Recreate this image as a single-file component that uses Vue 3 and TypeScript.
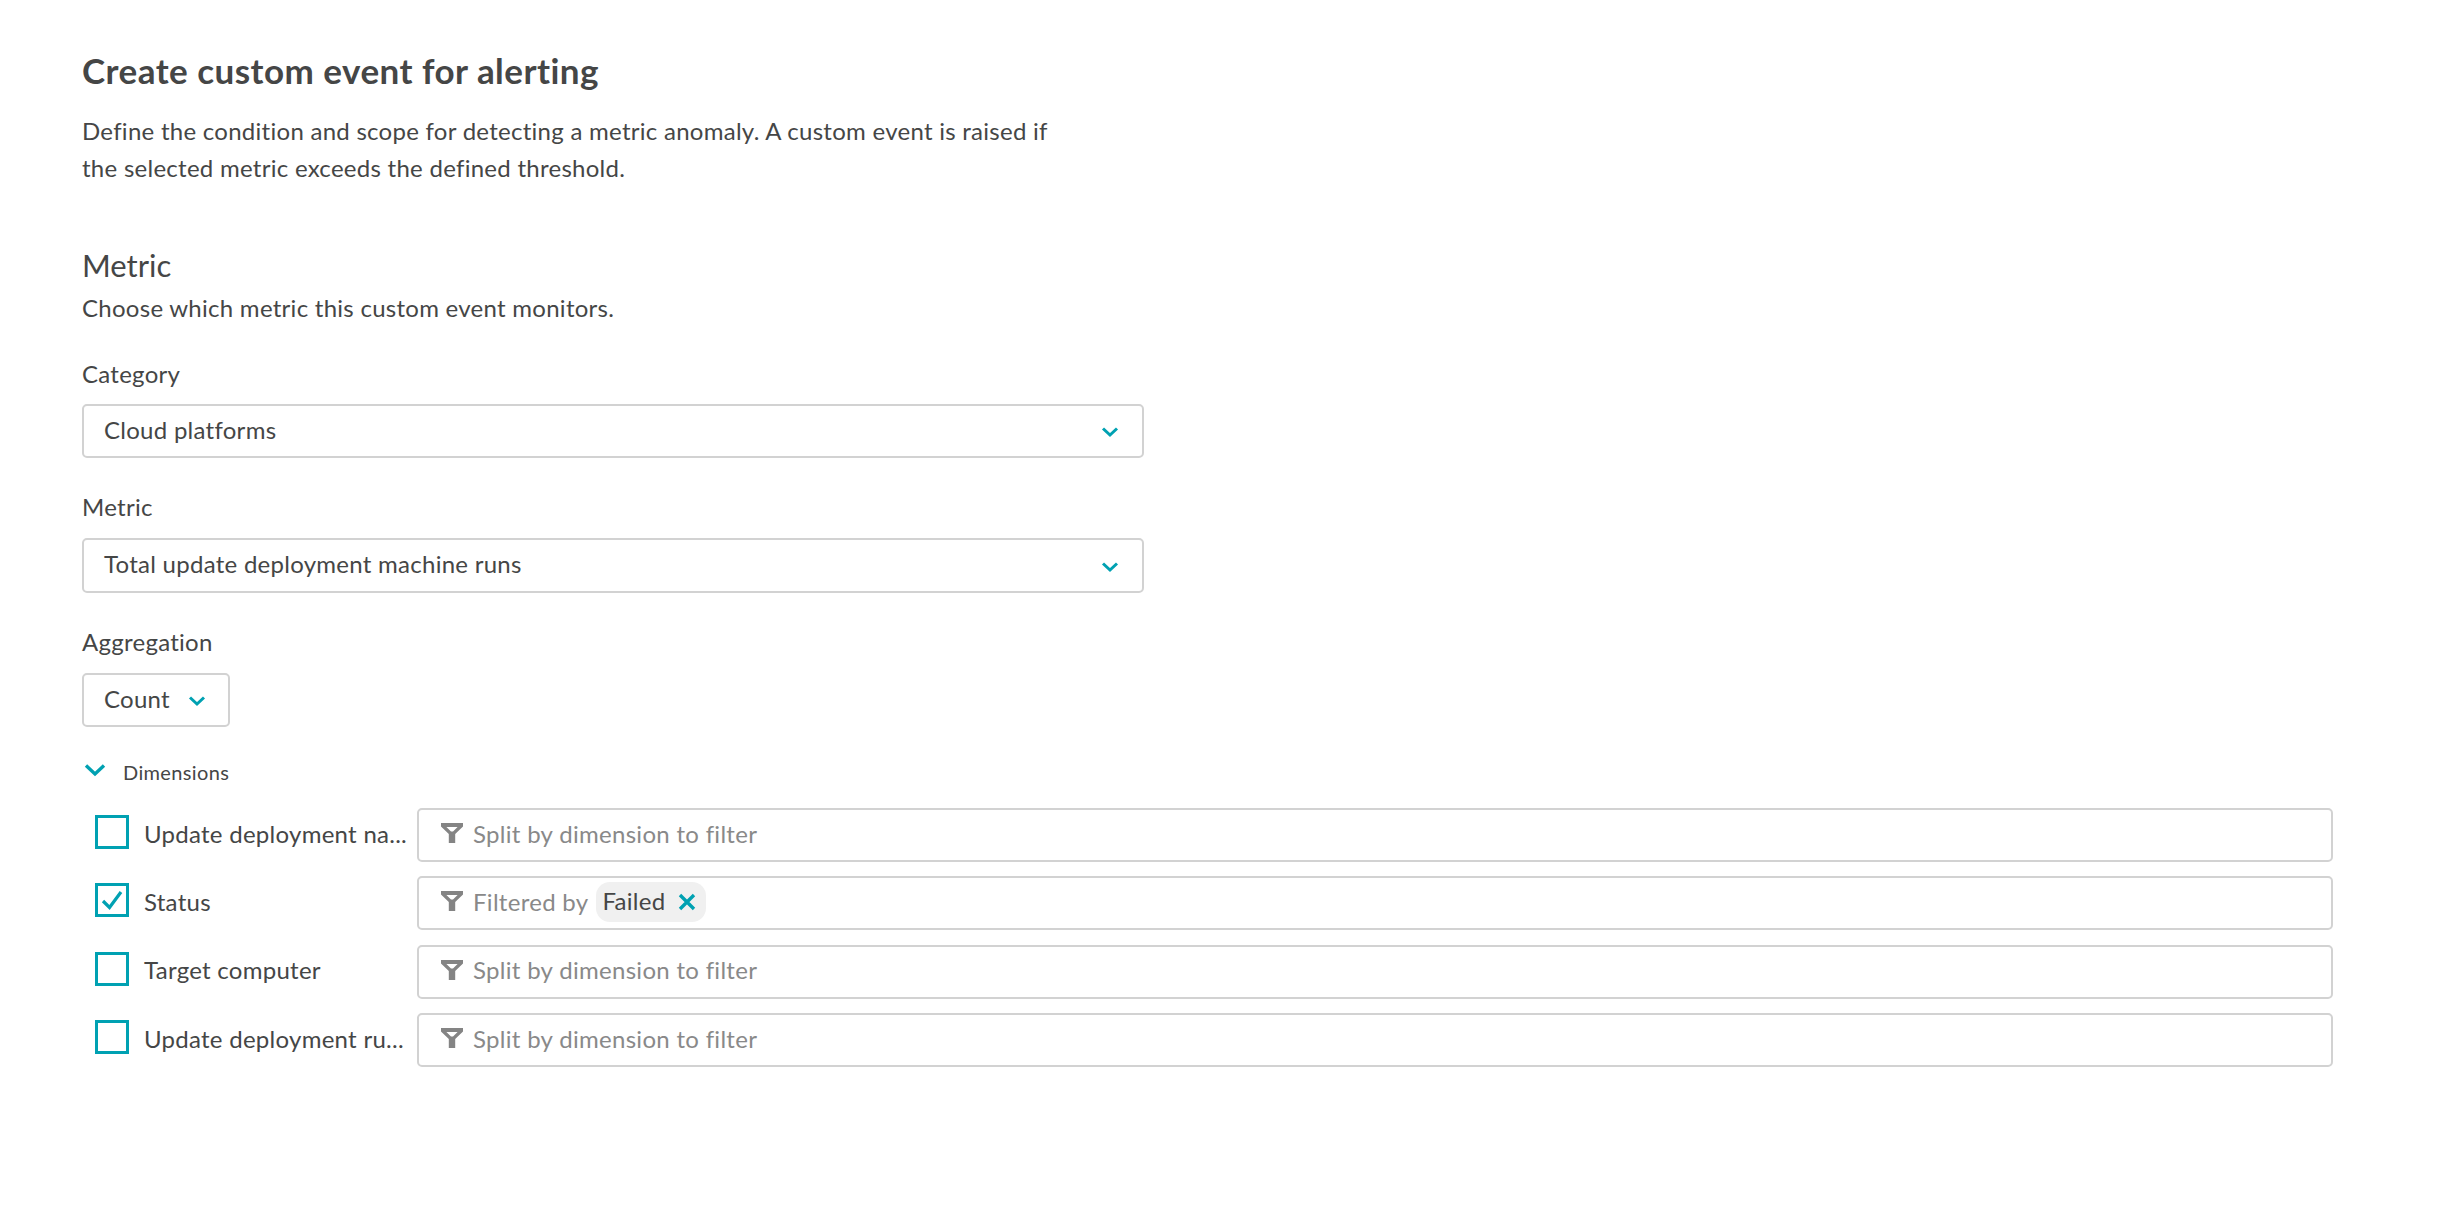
<script setup lang="ts">
interface Dimension {
  label: string
  checked: boolean
  filter?: string
}

const dimensions: Dimension[] = [
  { label: 'Update deployment na...', checked: false },
  { label: 'Status', checked: true, filter: 'Failed' },
  { label: 'Target computer', checked: false },
  { label: 'Update deployment ru...', checked: false },
]
</script>

<template>
  <main class="page">
    <h1 class="title">Create custom event for alerting</h1>
    <p class="intro">
      Define the condition and scope for detecting a metric anomaly. A custom event is raised if<br />
      the selected metric exceeds the defined threshold.
    </p>

    <h2 class="section">Metric</h2>
    <p class="section-sub">Choose which metric this custom event monitors.</p>

    <label class="field-label label-category">Category</label>
    <div class="select select-wide select-category">
      <span class="select-value">Cloud platforms</span>
      <svg class="chevron" viewBox="0 0 18 12"><path d="M2 2.5 9 9l7-6.5" /></svg>
    </div>

    <label class="field-label label-metric">Metric</label>
    <div class="select select-wide select-metric">
      <span class="select-value">Total update deployment machine runs</span>
      <svg class="chevron" viewBox="0 0 18 12"><path d="M2 2.5 9 9l7-6.5" /></svg>
    </div>

    <label class="field-label label-aggregation">Aggregation</label>
    <div class="select select-small">
      <span class="select-value">Count</span>
      <svg class="chevron" viewBox="0 0 18 12"><path d="M2 2.5 9 9l7-6.5" /></svg>
    </div>

    <div class="dimensions-head">
      <svg class="dim-chevron" viewBox="0 0 22 14"><path d="M2 2.5 11 11l9-8.5" /></svg>
      <span class="dim-title">Dimensions</span>
    </div>

    <div class="rows">
      <div v-for="dim in dimensions" :key="dim.label" class="row">
        <span class="checkbox">
          <svg v-if="dim.checked" class="check" viewBox="0 0 24 24"><path d="M3 13l6.5 6.5L21 4" /></svg>
        </span>
        <span class="row-label">{{ dim.label }}</span>
        <div class="filter-input">
          <svg class="funnel" viewBox="0 0 22 20"><path d="M0 0h22v3.6l-7.8 7.4V20H7.8v-9L0 3.6zM5.4 4l4.6 4.4h2L16.6 4z" fill-rule="evenodd" /></svg>
          <template v-if="dim.filter">
            <span class="placeholder">Filtered by</span>
            <span class="chip">
              <span class="chip-text">{{ dim.filter }}</span>
              <svg class="chip-x" viewBox="0 0 18 18"><path d="M2 2l14 14M16 2 2 16" /></svg>
            </span>
          </template>
          <span v-else class="placeholder">Split by dimension to filter</span>
        </div>
      </div>
    </div>
  </main>
</template>

<style>
html,
body {
  margin: 0;
  background: #ffffff;
}
</style>

<style scoped>
.page {
  box-sizing: border-box;
  width: 2437px;
  height: 1225px;
  padding: 50px 104px 0 82px;
  color: #454646;
  font-family: Lato, "Noto Sans", sans-serif;
  font-size: 24px;
  letter-spacing: 0.27px;
  font-variant-ligatures: none;
  background: #fff;
  overflow: hidden;
}

.title {
  margin: 0;
  font-size: 35px;
  font-weight: 700;
  letter-spacing: 0.47px;
  line-height: 40px;
}

.intro {
  margin: 22px 0 0;
  line-height: 37px;
}

.section {
  margin: 59px 0 0;
  font-size: 31px;
  font-weight: 400;
  letter-spacing: 0;
  line-height: 40px;
}

.section-sub {
  margin: 8px 0 0;
  line-height: 30px;
}

.field-label {
  display: block;
  line-height: 30px;
}

.label-category {
  margin-top: 36px;
}

.label-metric {
  margin-top: 34px;
}

.label-aggregation {
  margin-top: 34px;
}

.select {
  box-sizing: border-box;
  display: flex;
  align-items: center;
  justify-content: space-between;
  margin-top: 15px;
  padding: 0 23px 0 20px;
  border: 2px solid #d2d2d2;
  border-radius: 5px;
  background: #fff;
}

.select-value {
  margin-top: -3px;
}

.select-wide {
  width: 1062px;
}

.select-category {
  height: 54px;
}

.select-metric {
  height: 55px;
  margin-top: 16px;
}

.select-metric .select-value {
  margin-top: -5px;
}

.select-small {
  width: 148px;
  height: 54px;
  margin-top: 16px;
  padding-right: 22px;
  gap: 18px;
}

.chevron {
  width: 18px;
  height: 12px;
  flex: none;
  margin-top: 2px;
  fill: none;
  stroke: #00a1b2;
  stroke-width: 3;
}

.dimensions-head {
  display: flex;
  align-items: center;
  gap: 17px;
  height: 30px;
  margin-top: 31px;
  padding-left: 2px;
  font-size: 20px;
  letter-spacing: 0.37px;
}

.dim-title {
  margin-top: -3px;
}

.dim-chevron {
  width: 22px;
  height: 14px;
  margin-top: -6px;
  fill: none;
  stroke: #00a1b2;
  stroke-width: 3.4;
}

.rows {
  display: grid;
  row-gap: 14.4px;
  margin-top: 20px;
}

.row {
  display: grid;
  grid-template-columns: 34px 288px 1fr;
  align-items: center;
  height: 54px;
  padding-left: 13px;
}

.checkbox {
  box-sizing: border-box;
  display: flex;
  align-items: center;
  justify-content: center;
  width: 34px;
  height: 34px;
  margin-top: -6px;
  border: 3px solid #00a1b2;
}

.check {
  width: 24px;
  height: 24px;
  fill: none;
  stroke: #00a1b2;
  stroke-width: 3.2;
}

.row-label {
  padding-left: 15px;
  white-space: nowrap;
  margin-top: -4px;
}

.filter-input {
  box-sizing: border-box;
  display: flex;
  align-items: center;
  height: 54px;
  padding-left: 22px;
  border: 2px solid #d2d2d2;
  border-radius: 5px;
}

.funnel {
  width: 22px;
  height: 20px;
  flex: none;
  margin: -4px 10px 0 0;
  fill: #848484;
}

.placeholder {
  color: #898989;
  margin-top: -4px;
  letter-spacing: 0.3px;
}

.chip {
  display: flex;
  align-items: center;
  gap: 13px;
  height: 40px;
  margin: -2px 0 0 8px;
  padding: 0 10px 0 6px;
  border-radius: 14px;
  background: #f0f0f0;
  color: #454646;
}

.chip-text {
  margin-top: -3px;
}

.chip-x {
  width: 18px;
  height: 18px;
  fill: none;
  stroke: #00a1b2;
  stroke-width: 3.4;
}
</style>
